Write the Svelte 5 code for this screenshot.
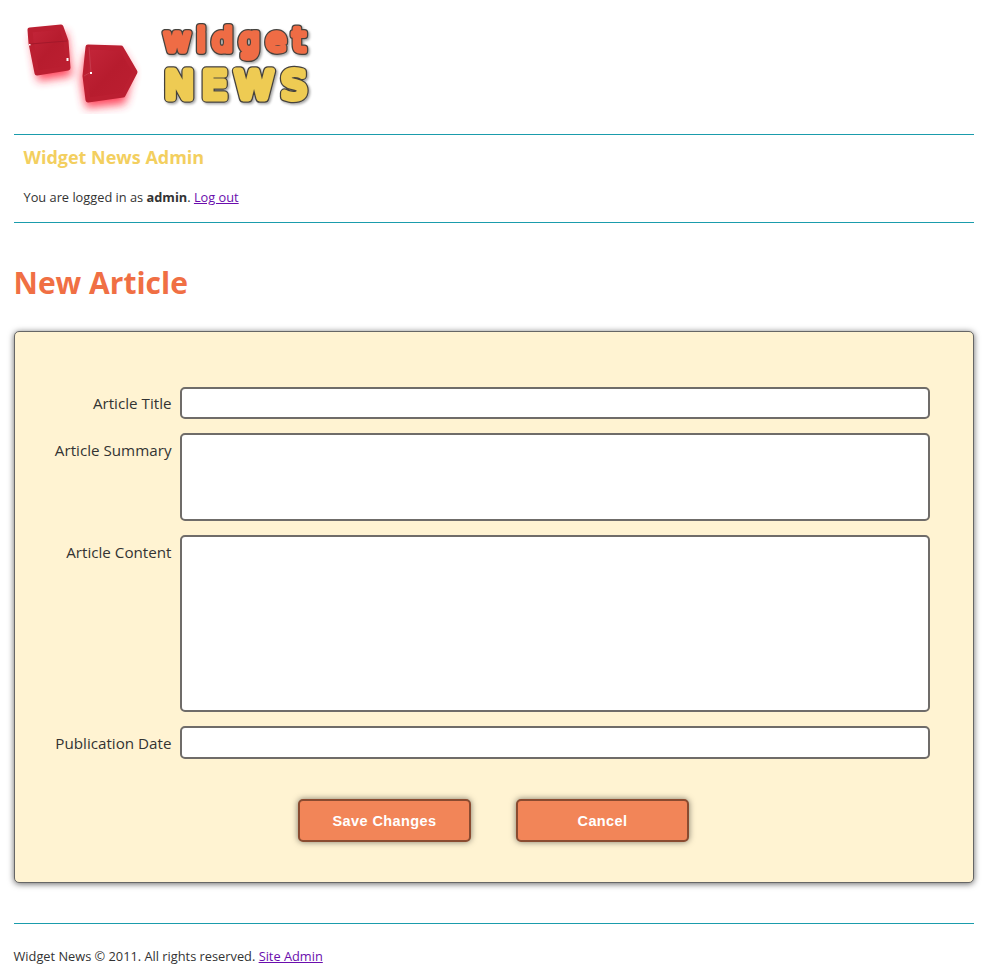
<script>
  let title = '';
  let summary = '';
  let content = '';
  let publicationDate = '';
</script>

<div class="container">
  <header class="logo">
    <svg width="320" height="100" viewBox="14 14 320 100" role="img" aria-label="Widget News logo">
      <defs>
        <filter id="glow" x="-40%" y="-40%" width="180%" height="180%">
          <feGaussianBlur stdDeviation="5" />
        </filter>
        <filter id="shade" x="-10%" y="-10%" width="125%" height="125%">
          <feDropShadow dx="1.5" dy="1.5" stdDeviation="1.2" flood-color="#000" flood-opacity="0.35" />
        </filter>
        <linearGradient id="cube" x1="0" y1="0" x2="1" y2="1">
          <stop offset="0" stop-color="#c4263a" />
          <stop offset="0.5" stop-color="#b71c2e" />
          <stop offset="1" stop-color="#bc1f31" />
        </linearGradient>
      </defs>
      <g fill="#ff2a44" opacity="0.85" filter="url(#glow)">
        <path d="M31 36 L66 32 L70 60 L72 76 L38 81 Z" />
        <path d="M86 52 L122 52 L133 72 L125 104 L86 108 L81 80 Z" />
      </g>
      <path class="cube" d="M30 30 L61 27 L66 41 L68 68 L37 73 L31 43 Z" />
      <path d="M30 44 L67 41" stroke="#a3182a" stroke-width="1" fill="none" />
      <path class="cube" d="M88 47 L121 48 L135 72 L123 95 L88 100 L85 76 Z" />
      <path d="M84 76 L91 72 L89 47" stroke="#c63a4c" stroke-width="1" fill="none" />
      <g fill="#fff">
        <rect x="66.500" y="58" width="2" height="3" />
        <rect x="90" y="72" width="2" height="2" />
        <rect x="29" y="44" width="1.500" height="1.500" />
      </g>
      <g class="logo-text" filter="url(#shade)">
        <text class="outline small" x="164" y="51" font-size="32" textLength="141" lengthAdjust="spacing">widget</text>
        <text class="w" x="164" y="51" font-size="32" textLength="141" lengthAdjust="spacing">widget</text>
        <text class="outline big" x="165" y="98" font-size="38" textLength="141" lengthAdjust="spacing">NEWS</text>
        <text class="n" x="165" y="98" font-size="38" textLength="141" lengthAdjust="spacing">NEWS</text>
      </g>
    </svg>
  </header>

  <section class="admin-header">
    <h2>Widget News Admin</h2>
    <p>You are logged in as <b>admin</b>. <a href="#logout">Log out</a></p>
  </section>

  <h1>New Article</h1>

  <form on:submit|preventDefault>
    <div class="row">
      <label for="title">Article Title</label>
      <input id="title" type="text" bind:value={title} />
    </div>
    <div class="row top">
      <label for="summary">Article Summary</label>
      <textarea id="summary" class="summary" bind:value={summary}></textarea>
    </div>
    <div class="row top">
      <label for="content">Article Content</label>
      <textarea id="content" class="content" bind:value={content}></textarea>
    </div>
    <div class="row">
      <label for="publicationDate">Publication Date</label>
      <input id="publicationDate" class="date" type="text" bind:value={publicationDate} />
    </div>
    <div class="buttons">
      <button type="submit">Save Changes</button>
      <button type="button">Cancel</button>
    </div>
  </form>

  <footer>
    Widget News © 2011. All rights reserved. <a href="#admin">Site Admin</a>
  </footer>
</div>

<style>
  :global(body) {
    background: #fff;
    color: #333;
    font-family: "Open Sans", sans-serif;
    font-size: 12.8px;
  }

  .container {
    width: 960px;
    margin: 0 auto;
    padding-top: 14px;
  }

  .logo {
    height: 120px;
  }

  .logo svg {
    display: block;
  }

  .logo-text text {
    font-family: "DejaVu Sans", sans-serif;
    font-weight: 400;
    stroke-linejoin: round;
    stroke-linecap: round;
  }

  .cube {
    fill: url(#cube);
    stroke: #bb1f31;
    stroke-width: 5px;
    stroke-linejoin: round;
  }

  .outline {
    fill: #45423e;
    stroke: #45423e;
  }

  .small {
    stroke-width: 8px;
  }

  .big {
    stroke-width: 9.5px;
  }

  .w {
    fill: #ef6c45;
    stroke: #ef6c45;
    stroke-width: 5.5px;
  }

  .n {
    fill: #eecb52;
    stroke: #eecb52;
    stroke-width: 7px;
  }

  .admin-header {
    height: 76px;
    border-top: 1px solid #1a9cac;
    border-bottom: 1px solid #1a9cac;
    padding: 11px 10px 0;
    box-sizing: content-box;
  }

  h2 {
    margin: 0;
    color: #f3cf5f;
    font-size: 18px;
    font-weight: 700;
    line-height: 22px;
  }

  .admin-header p {
    margin: 21px 0 0;
    line-height: 16px;
  }

  a {
    color: #6a0dad;
  }

  h1 {
    margin: 40px 0 28px;
    color: #f06f44;
    font-size: 30px;
    font-weight: 700;
    line-height: 40px;
  }

  form {
    box-sizing: border-box;
    height: 552px;
    padding: 55px 43px 0 0;
    background: #fff3d2;
    border: 1px solid #666;
    border-radius: 5px;
    box-shadow: 0 1px 6px rgba(0, 0, 0, 0.6);
  }

  .row {
    display: flex;
    align-items: center;
    gap: 8px;
    margin-bottom: 14px;
  }

  .row.top {
    align-items: flex-start;
  }

  label {
    flex: 0 0 157px;
    text-align: right;
    font-size: 15.2px;
    line-height: 20px;
  }

  .row.top label {
    padding-top: 7px;
  }

  input,
  textarea {
    display: block;
    box-sizing: border-box;
    width: 750px;
    margin: 0;
    background: #fff;
    border: 2px solid #6f6c69;
    border-radius: 5px;
    resize: none;
    outline: none;
  }

  input {
    height: 32px;
  }

  .date {
    height: 33px;
  }

  .summary {
    height: 88px;
  }

  .content {
    height: 177px;
  }

  .buttons {
    display: flex;
    justify-content: center;
    gap: 45px;
    margin-top: 40px;
    padding-left: 43px;
  }

  button {
    box-sizing: border-box;
    width: 173px;
    height: 43px;
    padding-top: 2px;
    background: #f28558;
    border: 2px solid #8a4b30;
    border-radius: 5px;
    box-shadow: 0 0 6px rgba(0, 0, 0, 0.5);
    color: #fff;
    font-family: "Liberation Sans", sans-serif;
    font-size: 14.5px;
    font-weight: 700;
    letter-spacing: 0.4px;
    cursor: pointer;
  }

  footer {
    margin-top: 40px;
    padding-top: 24px;
    border-top: 1px solid #1a9cac;
    line-height: 16px;
  }
</style>
